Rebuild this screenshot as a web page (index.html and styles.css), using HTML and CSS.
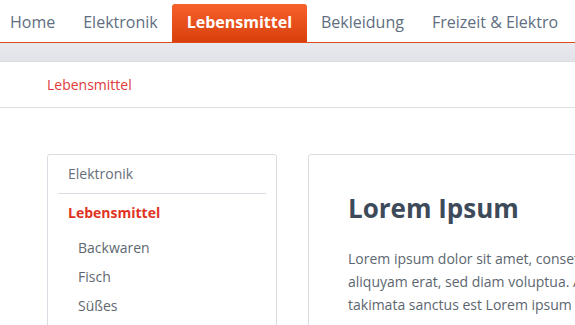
FILE: index.html
```html
<!DOCTYPE html>
<html lang="de">
<head>
    <meta charset="UTF-8">
    <meta name="viewport" content="width=device-width, initial-scale=1.0">
    <title>Lebensmittel</title>
    <link rel="stylesheet" href="styles.css">
</head>
<body>
    <nav class="main-nav">
        <ul>
            <li><a href="#">Home</a></li>
            <li><a href="#">Elektronik</a></li>
            <li class="active"><a href="#">Lebensmittel</a></li>
            <li><a href="#">Bekleidung</a></li>
            <li><a href="#">Freizeit &amp; Elektro</a></li>
        </ul>
    </nav>
    <div class="nav-band"></div>
    <div class="breadcrumb">
        <a href="#">Lebensmittel</a>
    </div>

    <div class="page">
        <aside class="sidebar">
            <ul class="side-nav">
                <li class="side-item"><a href="#">Elektronik</a></li>
                <li class="side-item current">
                    <a href="#">Lebensmittel</a>
                    <ul class="sub-nav">
                        <li><a href="#">Backwaren</a></li>
                        <li><a href="#">Fisch</a></li>
                        <li><a href="#">Süßes</a></li>
                    </ul>
                </li>
            </ul>
        </aside>
        <main class="content">
            <h1>Lorem Ipsum</h1>
            <p>Lorem ipsum dolor sit amet, consetetur sadipscing elitr, sed diam nonumy eirmod tempor invidunt ut labore et dolore magna aliquyam erat, sed diam voluptua. At vero eos et accusam et justo duo dolores et ea rebum. Stet clita kasd gubergren, no sea takimata sanctus est Lorem ipsum dolor sit amet.</p>
        </main>
    </div>
</body>
</html>
```

FILE: styles.css
```css
body {
    margin: 0;
    background-color: #fff;
    font-family: "Open Sans", "DejaVu Sans", sans-serif;
    color: #5c6670;
    overflow: hidden;
}
a {
    text-decoration: none;
    color: inherit;
}
ul {
    list-style: none;
    margin: 0;
    padding: 0;
}
.main-nav {
    border-bottom: 1px solid #e04a18;
    padding-top: 4px;
}
.main-nav ul {
    display: flex;
    margin-left: -4px;
    white-space: nowrap;
}
.main-nav li a {
    display: block;
    height: 38px;
    line-height: 37px;
    padding: 0 14px;
    font-size: 16px;
    color: #5e6e80;
}
.main-nav li.active a {
    padding: 0 15px;
    background: linear-gradient(#f7612c, #d83f0c);
    border-radius: 3px 3px 0 0;
    color: #fff;
    font-weight: bold;
}
.nav-band {
    height: 18px;
    background: linear-gradient(#e8e9ee, #e2e3e9);
    border-bottom: 1px solid #dcdde3;
}
.breadcrumb {
    display: flex;
    align-items: center;
    height: 45px;
    padding-left: 47px;
    border-bottom: 1px solid #dedede;
    font-size: 14px;
}
.breadcrumb a {
    color: #e03a3a;
}
.page {
    display: flex;
    gap: 31px;
    padding: 46px 0 0 47px;
}
.sidebar {
    flex: 0 0 230px;
    border: 1px solid #dcdce4;
    border-radius: 3px;
    padding: 0 10px;
    box-sizing: border-box;
    height: 200px;
}
.side-item > a {
    display: block;
    padding-left: 10px;
    height: 38px;
    line-height: 38px;
    font-size: 14px;
    color: #666e78;
}
.side-item + .side-item {
    border-top: 1px solid #dcdce4;
}
.side-item.current > a {
    color: #e0331f;
    font-weight: bold;
}
.sub-nav {
    padding-top: 1px;
}
.sub-nav li a {
    display: block;
    padding-left: 20px;
    height: 29px;
    line-height: 29px;
    font-size: 14px;
    color: #606870;
}
.content {
    flex: 0 0 845px;
    border: 1px solid #dcdce4;
    border-radius: 3px;
    padding: 36px 39px 35px;
    height: 200px;
}
.content h1 {
    margin: 0 0 22px;
    font-size: 26px;
    font-weight: bold;
    line-height: 34px;
    color: #3d4a5a;
}
.content p {
    margin: 0;
    font-size: 14px;
    line-height: 23px;
    color: #5c6670;
}
```
